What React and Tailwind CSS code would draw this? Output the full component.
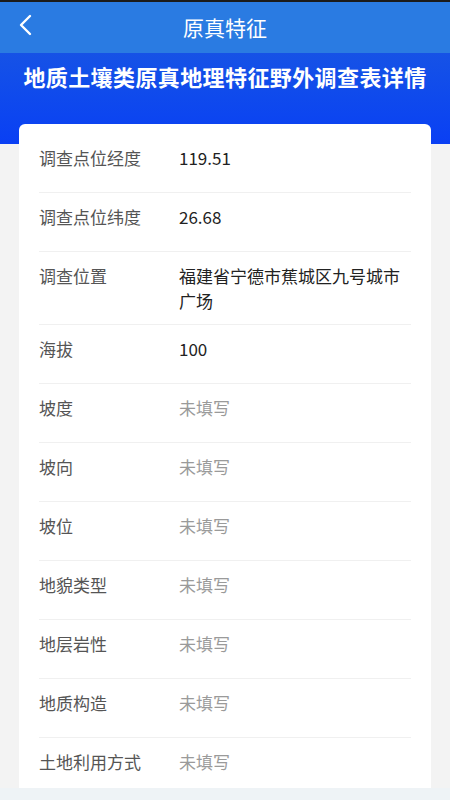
import React from 'react';

const rows = [
    { label: '调查点位经度', value: '119.51' },
    { label: '调查点位纬度', value: '26.68' },
    { label: '调查位置', value: '福建省宁德市蕉城区九号城市广场' },
    { label: '海拔', value: '100' },
    { label: '坡度' },
    { label: '坡向' },
    { label: '坡位' },
    { label: '地貌类型' },
    { label: '地层岩性' },
    { label: '地质构造' },
    { label: '土地利用方式' },
];

const font = { fontFamily: '"Noto Sans CJK SC", "Noto Sans", sans-serif' };

const App = () => {
    return (
        <div className="w-[450px] h-[800px] flex flex-col bg-[#f3f3f3] overflow-hidden" style={font}>
            <div className="h-[2px] bg-[#1b1b1b]" />
            <div className="h-[51px] bg-[#2a7be2] relative flex items-center justify-center">
                <button type="button" className="absolute left-[17px] top-[11px] text-white">
                    <svg width="18" height="24" viewBox="0 0 18 24" fill="none">
                        <path d="M13 3 L4 12 L13 21" stroke="white" strokeWidth="2.4" strokeLinecap="round" strokeLinejoin="round" />
                    </svg>
                </button>
                <h1 className="text-white text-[21px] leading-none">原真特征</h1>
            </div>

            <div className="flex-1 overflow-hidden relative">
                <div className="h-[91px] bg-gradient-to-b from-[#1652e6] to-[#0a3ff4] flex justify-center pt-[9px]">
                    <h2 className="text-white text-[22px] font-bold leading-[28px] tracking-[0.4px]">
                        地质土壤类原真地理特征野外调查表详情
                    </h2>
                </div>

                <div className="mx-[19px] -mt-[20px] bg-white rounded-[6px] px-[20px] pt-[10px] relative">
                    {rows.map((row, i) => (
                        <div
                            key={row.label}
                            className={`flex min-h-[59px] py-[11px] ${i < rows.length - 1 ? 'border-b border-[#f0f0f0]' : ''}`}
                        >
                            <div className="w-[140px] shrink-0 text-[17px] leading-[25px] text-[#555555]">{row.label}</div>
                            <div
                                className={`flex-1 text-[17px] leading-[25px] ${row.value ? 'text-[#222222]' : 'text-[#9a9a9a]'}`}
                            >
                                {row.value || '未填写'}
                            </div>
                        </div>
                    ))}
                </div>
            </div>
            <div className="h-[12px] bg-[#eef3f6]" />
        </div>
    );
};

export default App;
